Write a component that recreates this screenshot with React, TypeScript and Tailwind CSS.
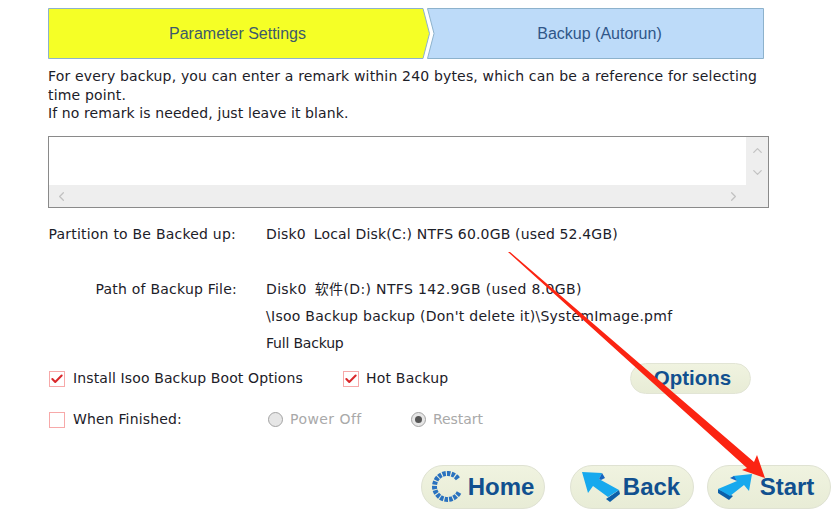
import { Check, ChevronDown, ChevronLeft, ChevronRight, ChevronUp } from "lucide-react";
import type { ReactNode } from "react";

const bodyFont = "font-['DejaVu_Sans','Noto_Sans_CJK_SC',sans-serif]";

function Step({ tone, children }: { tone: "active" | "next"; children: ReactNode }) {
  const active = tone === "active";
  return (
    <div className={`relative flex h-[51px] items-center justify-center ${active ? "w-[382px] pr-[3px]" : "-ml-[3px] w-[337px] pl-[8px]"}`}>
      <svg className="absolute inset-0" width="100%" height="51" preserveAspectRatio="none" viewBox={active ? "0 0 382 51" : "0 0 337 51"}>
        {active ? (
          <polygon points="0.5,0.5 375,0.5 381.5,25.5 375,50.5 0.5,50.5" fill="#f5ff26" stroke="#8db2cc" />
        ) : (
          <polygon points="0.5,0.5 336.5,0.5 336.5,50.5 0.5,50.5 7,25.5" fill="#bddbf9" stroke="#8db2cc" />
        )}
      </svg>
      <span className={`relative font-['Liberation_Sans',sans-serif] text-[16px] ${active ? "text-[#3d5a6b]" : "text-[#2f5688]"}`}>
        {children}
      </span>
    </div>
  );
}

function CheckBox({ checked }: { checked?: boolean }) {
  return (
    <span className="flex h-[16px] w-[16px] items-center justify-center border border-[#f7a9a9] bg-white">
      {checked && <Check size={14} strokeWidth={3.5} className="text-[#d9282b]" />}
    </span>
  );
}

function Radio({ selected }: { selected?: boolean }) {
  return (
    <span className="flex h-[15px] w-[15px] items-center justify-center rounded-full border border-[#a3a3a3] bg-[#e6e6e6]">
      {selected && <span className="h-[7px] w-[7px] rounded-full bg-[#555555]" />}
    </span>
  );
}

function HomeIcon() {
  return (
    <svg width="31" height="31" viewBox="0 0 31 31">
      <path
        d="M27 21.5 A13 13 0 1 1 26.5 8.5"
        fill="none"
        stroke="#2a72bf"
        strokeWidth="5"
        strokeDasharray="3.4 1.1"
      />
    </svg>
  );
}

function BackIcon() {
  return (
    <svg width="38" height="31" viewBox="0 0 38 31">
      <polygon points="37,19 38,23 28,31 24,28" fill="#0c5fa8" />
      <polygon points="0,1 20,2 17,8 37,19 26,26 11,15 6,22" fill="#17a9ee" />
      <polygon points="17,8 20,2 23,7 19,9" fill="#1565c0" />
    </svg>
  );
}

function StartIcon() {
  return (
    <svg width="34" height="26" viewBox="0 0 34 26">
      <polygon points="0,15 0,19 11,26 15,22" fill="#0c5fa8" />
      <polygon points="34,0 15,2 19,7 0,15 12,22 26,11 31,17" fill="#17a9ee" />
      <polygon points="12,4 16,2 19,7" fill="#1565c0" />
    </svg>
  );
}

function PillButton({ icon, label, className }: { icon: ReactNode; label: string; className: string }) {
  return (
    <div className={`flex h-[44px] w-[124px] items-center justify-center rounded-full border border-[#dfe2d2] bg-gradient-to-b from-[#f0f3e0] to-[#e8ecd6] ${className}`}>
      {icon}
      <span className="font-['Liberation_Sans',sans-serif] text-[24px] font-bold text-[#11508f]">{label}</span>
    </div>
  );
}

export default function App() {
  return (
    <div className={`relative flex h-[522px] w-[840px] flex-col overflow-hidden bg-white pl-[48px] pt-[8px] text-[14px] text-[#1c2028] ${bodyFont}`}>
      <div className="flex">
        <Step tone="active">Parameter Settings</Step>
        <Step tone="next">Backup (Autorun)</Step>
      </div>

      <p className="mt-[8px] w-[720px] leading-[18.5px] tracking-[0.17px]">
        For every backup, you can enter a remark within 240 bytes, which can be a reference for selecting
        <br />
        time point.
        <br />
        <span className="tracking-[0.1px]">If no remark is needed, just leave it blank.</span>
      </p>

      <div className="mt-[13.5px] flex h-[72px] w-[721px] flex-col border border-[#8a8a8a]">
        <div className="flex flex-1">
          <div className="flex-1 bg-white" />
          <div className="flex w-[22px] flex-col items-center justify-center gap-[7px] bg-[#eeeeee] text-[#c2c2c2]">
            <ChevronUp size={15} />
            <ChevronDown size={15} />
          </div>
        </div>
        <div className="flex h-[22px] items-center justify-between bg-[#eeeeee] pl-[5px] pr-[27px] text-[#c2c2c2]">
          <ChevronLeft size={15} />
          <ChevronRight size={15} />
        </div>
      </div>

      <div className="mt-[16px] flex h-[20px] items-center">
        <span className="w-[188px] text-right tracking-[0.22px]">Partition to Be Backed up:</span>
        <span className="ml-[30px] flex gap-[8px] whitespace-pre tracking-[0.16px]">
          <span>Disk0</span>
          <span>Local Disk(C:) NTFS 60.0GB (used 52.4GB)</span>
        </span>
      </div>

      <div className="mt-[31.5px] flex">
        <span className="flex h-[27px] w-[189px] items-center justify-end tracking-[0.22px]">Path of Backup File:</span>
        <div className="ml-[29px] flex flex-col">
          <span className="flex h-[27px] items-center gap-[8px] whitespace-pre tracking-[0.35px]">
            <span>Disk0</span>
            <span>软件(D:) NTFS 142.9GB (used 8.0GB)</span>
          </span>
          <span className="flex h-[27px] items-center tracking-[0.27px]">\Isoo Backup backup (Don't delete it)\SystemImage.pmf</span>
          <span className="flex h-[27px] items-center tracking-[-0.2px]">Full Backup</span>
        </div>
      </div>

      <div className="mt-[6.5px] flex h-[31px] items-center">
        <div className="ml-[1px] flex w-[294px] items-center gap-[8px] tracking-[0.12px]">
          <CheckBox checked />
          <span>Install Isoo Backup Boot Options</span>
        </div>
        <div className="flex w-[287px] items-center gap-[7px] tracking-[0.2px]">
          <CheckBox checked />
          <span>Hot Backup</span>
        </div>
        <div className="flex h-[31px] w-[121px] items-center justify-center rounded-full border border-[#e2e5d5] bg-gradient-to-b from-[#f0f3e0] to-[#e8ecd6] pl-[4px] font-['Liberation_Sans',sans-serif] text-[20.5px] font-bold text-[#11508f]">
          Options
        </div>
      </div>

      <div className="mt-[15.5px] flex h-[20px] items-center">
        <div className="ml-[1px] flex w-[219px] items-center gap-[8px] tracking-[0.15px]">
          <CheckBox />
          <span>When Finished:</span>
        </div>
        <div className="flex w-[143px] items-center gap-[7px] tracking-[0.45px] text-[#a9a9a9]">
          <Radio />
          <span>Power Off</span>
        </div>
        <div className="flex items-center gap-[7px] tracking-[-0.05px] text-[#a9a9a9]">
          <Radio selected />
          <span>Restart</span>
        </div>
      </div>

      <div className="ml-[373px] mt-[35px] flex">
        <PillButton icon={<HomeIcon />} label="Home" className="gap-[5px]" />
        <PillButton icon={<BackIcon />} label="Back" className="ml-[25px] gap-[3px] pr-[2px]" />
        <PillButton icon={<StartIcon />} label="Start" className="ml-[13px] gap-[8px] pr-[6px]" />
      </div>

      <svg className="pointer-events-none absolute left-0 top-0" width="840" height="522" viewBox="0 0 840 522">
        <polygon points="508,252 510,252 754,462 757,455 765,478 742,470 747,468" fill="#fb2412" />
      </svg>
    </div>
  );
}
